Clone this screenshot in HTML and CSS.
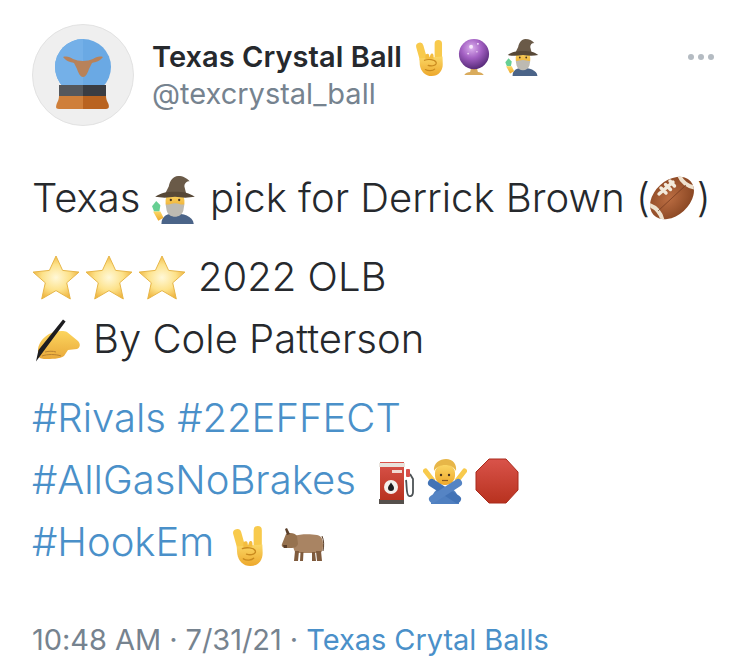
FILE: index.html
```html
<!DOCTYPE html>
<html lang="en">
<head>
  <meta charset="UTF-8" />
  <meta name="viewport" content="width=device-width, initial-scale=1" />
  <title>Texas Crystal Ball tweet</title>
  <link rel="stylesheet" href="styles.css">
</head>
<body>

  <svg class="defs" aria-hidden="true">
    <defs>
      <linearGradient id="skin" x1="0" y1="0" x2="0" y2="1">
        <stop offset="0" stop-color="#fbd765"/>
        <stop offset="1" stop-color="#eda82c"/>
      </linearGradient>
      <linearGradient id="writehand" x1="0" y1="0" x2="0" y2="1">
        <stop offset="0" stop-color="#fcd55e"/>
        <stop offset="1" stop-color="#e9a93a"/>
      </linearGradient>
      <radialGradient id="starfill" cx="0.5" cy="0.5" r="0.55">
        <stop offset="0" stop-color="#fff8d8"/>
        <stop offset="0.55" stop-color="#fde28a"/>
        <stop offset="1" stop-color="#eeb038"/>
      </radialGradient>
      <radialGradient id="orb" cx="0.42" cy="0.3" r="0.75">
        <stop offset="0" stop-color="#dcb0ee"/>
        <stop offset="0.45" stop-color="#a25fc2"/>
        <stop offset="1" stop-color="#4e2470"/>
      </radialGradient>
      <radialGradient id="ballfill" cx="0.45" cy="0.45" r="0.65">
        <stop offset="0" stop-color="#bb6d42"/>
        <stop offset="1" stop-color="#84421f"/>
      </radialGradient>
      <linearGradient id="redfill" x1="0" y1="0" x2="0" y2="1">
        <stop offset="0" stop-color="#d9534a"/>
        <stop offset="1" stop-color="#b8321f"/>
      </linearGradient>
      <clipPath id="ballclip">
        <ellipse cx="22" cy="22" rx="25" ry="17.500" transform="rotate(-42 22 22)"/>
      </clipPath>

      <symbol id="rock" viewBox="0 0 32 40">
        <path fill="none" stroke="#f8ca4c" stroke-width="8" stroke-linecap="round" d="M5 8l4.500 16M25 5v20"/>
        <path fill="url(#skin)" d="M4.500 21l25-2 .3 8c0 8-5 13-12 13S6 35 5 28z"/>
        <path fill="#f4bd3e" d="M11 18c0-2 3-3 4-1l.5 3 1-3c1-2 3-1.500 3.300.5l.2 3.500-9 1z"/>
        <path fill="none" stroke="#c98a1e" stroke-width="1.300" stroke-linecap="round" d="M10 23c4-1.500 11-1 12.500 2s-3.500 5-8.500 3.500M11 33c3 2 8 1.500 10-.5"/>
      </symbol>

      <symbol id="crystal" viewBox="0 0 32 38">
        <path fill="#d9ab5c" d="M6 37c1-2 4-3 6-3l1-4h6l1 4c2 0 5 1 6 3z"/>
        <circle cx="16" cy="15.500" r="15.500" fill="url(#orb)"/>
        <circle cx="13" cy="8" r="2" fill="#f6e6fb"/>
        <circle cx="20" cy="5" r="1" fill="#f6e6fb"/>
        <circle cx="10" cy="15" r="1" fill="#ebcdf4"/>
        <circle cx="19" cy="13" r="0.800" fill="#ebcdf4"/>
      </symbol>

      <symbol id="mage" viewBox="0 0 44 46">
        <path fill="#4b6488" d="M9 46c0-8 6-10 13-10s17 2 18 10z"/>
        <rect x="13" y="16" width="18" height="17" rx="7" fill="url(#skin)"/>
        <path fill="#bdbab2" d="M13 27c3 1 5-1 9-1s6 2 9 1l-1 6c-2 8-14 8-16 0z"/>
        <circle cx="18" cy="23" r="1.100" fill="#4a3520"/>
        <circle cx="26" cy="23" r="1.100" fill="#4a3520"/>
        <path fill="#6a5a48" d="M25 0c5 0 8 2 11 5-3 0-5 2-5 5l2 8H12l4-8c1-5 4-10 9-10z"/>
        <path fill="#574837" d="M3 20c5-4 11-5 19-5s14 1 19 5c-6 1-12 1-19 0-7 1-13 1-19 0z"/>
        <path fill="#67cf93" d="M4 24l4 4-1 6H2l-2-5z"/>
        <path fill="url(#skin)" d="M1 34h7l3 6-5 3z"/>
      </symbol>

      <symbol id="football" viewBox="0 0 44 44">
        <ellipse cx="22" cy="22" rx="25" ry="17.500" transform="rotate(-42 22 22)" fill="url(#ballfill)"/>
        <g clip-path="url(#ballclip)">
          <path fill="none" stroke="#eee2cf" stroke-width="4" d="M28 -4c2 8 8 14 18 16M-4 28c9 2 15 8 17 18"/>
        </g>
        <path fill="none" stroke="#f3eadb" stroke-width="3.400" stroke-linecap="round" d="M9 18l14-12M11 12l5 5M15.500 8.500l5 5M20 5l4.500 5"/>
        <path fill="none" stroke="#70361d" stroke-width="0.700" d="M8 35L36 9"/>
      </symbol>

      <symbol id="star" viewBox="0 0 48 46">
        <path fill="url(#starfill)" stroke="#e7b648" stroke-width="1" stroke-linejoin="round" d="M24 1l6.600 14.400 16.400 1.700-12.300 10.700 3.600 16.200L24 35.600 9.700 44l3.600-16.200L1 17.100l16.400-1.700z"/>
      </symbol>

      <symbol id="writing" viewBox="0 0 48 44">
        <path fill="url(#writehand)" d="M4 30c1-7 6-12 11-15 6-3 14-4 18-2l11 9c3 3 2 7-1 8l-9 1-4 6c-4 3-13 3-19 3-3 0-7-1-7-4z"/>
        <path fill="none" stroke="#b98232" stroke-width="1" d="M8 37c5-2 14-2 19 0M11 33c4-1 8-1 11 0"/>
        <path fill="#1d1d20" d="M29 .500l2.600 2L9 33l-7 9.500L4.500 31z"/>
      </symbol>

      <symbol id="pump" viewBox="0 0 38 44">
        <rect x="2" y="39" width="25" height="5" fill="#55504c"/>
        <rect x="3" y="2" width="24" height="38" fill="url(#redfill)"/>
        <rect x="2" y="3" width="26" height="4" fill="#e9e3dc"/>
        <rect x="15" y="10" width="10" height="3" fill="#f2d9d2"/>
        <circle cx="14" cy="27" r="7" fill="#f4f0ec"/>
        <path fill="#1d1d20" d="M14 22.500c2 3 3 4 3 5.500a3 3 0 0 1-6 0c0-1.500 1-2.500 3-5.500z"/>
        <path fill="none" stroke="#4d5356" stroke-width="1.800" stroke-linejoin="round" d="M29 20c1 5 0 15 3 16s4-2 4-4V19l-3-5"/>
        <rect x="29" y="9" width="4" height="8" rx="1" fill="#d8504a"/>
      </symbol>

      <symbol id="noman" viewBox="0 0 44 46">
        <path fill="#4f7fc0" d="M8 46c0-10 5-17 14-17s14 7 14 17z"/>
        <path fill="none" stroke="#f8ca4c" stroke-width="5" stroke-linecap="round" d="M2.500 13l7 9M41.500 13l-7 9"/>
        <rect x="12" y="6" width="20" height="21" rx="9" fill="url(#skin)"/>
        <path fill="#e7b648" d="M11 13c-1-8 6-12 12-12 7 0 11 5 10 12-2-4-6-6-11-6-4 0-9 2-11 6z"/>
        <circle cx="18" cy="17" r="1.200" fill="#4a3520"/>
        <circle cx="26" cy="17" r="1.200" fill="#4a3520"/>
        <path fill="none" stroke="#8b5a1e" stroke-width="1.200" d="M19 22.500h6"/>
        <path fill="none" stroke="#4273b6" stroke-width="8" stroke-linecap="round" d="M9 25l25 16"/>
        <path fill="none" stroke="#5584c4" stroke-width="8" stroke-linecap="round" d="M35 25L10 41"/>
      </symbol>

      <symbol id="stop" viewBox="0 0 44 46">
        <path fill="url(#redfill)" stroke="#a92a1c" stroke-width="1" d="M14 1h17l12 13v18L31 45H14L1 32V14z"/>
      </symbol>

      <symbol id="ox" viewBox="0 0 44 34">
        <path fill="#a98463" d="M13 8c6-2 16-2 23-1 5 1 6 5 6 10s-1 7-3 8H15c-3-3-4-10-2-17z"/>
        <path fill="#7f5b3d" d="M13 33l1-10h4l-1 10zM19 33l.5-9h3l-.5 9zM36 33l-1-10h5l1 10zM31 33l0-9h3l1 9z"/>
        <path fill="#96724f" d="M5 6c4-2 9-1 11 2l1 8c-1 3-4 4-6 4H5c-3 0-5-2-4-4z"/>
        <path fill="#5a3f2a" d="M6 7L4 1l2-1 3 6zM2 17h4v3H3z"/>
        <path fill="none" stroke="#5a3f2a" stroke-width="1" d="M41 8c2 4 2 10 1 15"/>
      </symbol>

      <symbol id="avatar-art" viewBox="0 0 102 102">
        <circle cx="51" cy="51" r="50.500" fill="#efefef" stroke="#e2e2e2"/>
        <circle cx="51" cy="43" r="28" fill="#6aa9e4"/>
        <path fill="#74b0e8" d="M51 15a28 28 0 0 0 0 56z"/>
        <path fill="#b8825a" d="M31 33c4-1 7 0 10 2 3 1 6 2 10 2s7-1 10-2c3-2 6-3 10-2-3 4-7 5-11 6-1 2-2 4-3 6-1 3-3 8-6 8s-5-5-6-8c-1-2-2-4-3-6-4-1-8-2-11-6z"/>
        <rect x="27" y="61" width="24" height="11" fill="#55585d"/>
        <rect x="51" y="61" width="23" height="11" fill="#3a3d43"/>
        <path fill="#cf7f3a" d="M27 72h24v13H27c-4 0-3-3-2-6 1-2 2-4 2-7z"/>
        <path fill="#b96320" d="M51 72h23c0 3 1 5 2 7s2 6-2 6H51z"/>
      </symbol>
    </defs>
  </svg>

  <main class="tweet">
    <header class="author">
      <svg class="avatar"><use href="#avatar-art"/></svg>
      <div class="names">
        <div class="display-name">
          <span>Texas Crystal Ball</span>
          <svg class="emo rock-sm"><use href="#rock"/></svg>
          <svg class="emo ball-sm"><use href="#crystal"/></svg>
          <svg class="emo mage-sm"><use href="#mage"/></svg>
        </div>
        <div class="handle">@texcrystal_ball</div>
      </div>
      <div class="more"><i></i><i></i><i></i></div>
    </header>

    <section class="body">
      <p>Texas <svg class="emo big mage-big"><use href="#mage"/></svg> pick for Derrick Brown (<svg class="emo big ball-big"><use href="#football"/></svg>)</p>
      <p>
        <svg class="emo big star"><use href="#star"/></svg><svg class="emo big star"><use href="#star"/></svg><svg class="emo big star last"><use href="#star"/></svg>2022 OLB<br>
        <svg class="emo big writing"><use href="#writing"/></svg>By Cole Patterson
      </p>
      <p class="tags">
        #Rivals #22EFFECT<br>
        #AllGasNoBrakes <svg class="emo big pump"><use href="#pump"/></svg><svg class="emo big noman"><use href="#noman"/></svg><svg class="emo big stop"><use href="#stop"/></svg><br>
        #HookEm <svg class="emo big rock-big"><use href="#rock"/></svg><svg class="emo big ox"><use href="#ox"/></svg>
      </p>
    </section>

    <footer class="meta">10:48 AM · 7/31/21 · <span class="source">Texas Crytal Balls</span></footer>
  </main>

</body>
</html>
```

FILE: styles.css
```css
body {
  font-family: Inter, 'Liberation Sans', sans-serif;
  background: #fff;
  color: #26292d;
  margin: 0;
  padding: 0;
}

.defs {
  width: 0;
  height: 0;
  display: block;
}

.tweet {
  padding: 24px 34px 0 32px;
}

.author {
  display: flex;
  align-items: flex-start;
}

.avatar {
  width: 102px;
  height: 102px;
  flex: none;
}

.names {
  margin-left: 18px;
  flex: 1;
  padding-top: 13px;
}

.display-name {
  display: flex;
  align-items: center;
  font-size: 29px;
  font-weight: 600;
  line-height: 40px;
  letter-spacing: 0.05px;
}

.handle {
  font-size: 29px;
  line-height: 34px;
  color: #76838f;
  letter-spacing: 0;
}

.emo {
  flex: none;
}

.rock-sm { width: 30px; height: 37px; margin-left: 13px; }
.ball-sm { width: 32px; height: 37px; margin-left: 13px; }
.mage-sm { width: 36px; height: 37px; margin-left: 15px; }

.more {
  display: flex;
  gap: 4px;
  padding-top: 30px;
  margin-right: 2px;
}

.more i {
  width: 6px;
  height: 6px;
  border-radius: 50%;
  background: #b4bbc2;
}

.body {
  margin-top: 41px;
  font-size: 40px;
  font-weight: 350;
  letter-spacing: 0;
  line-height: 62px;
}

.body p {
  margin: 0 0 17px;
  white-space: nowrap;
}

.big {
  vertical-align: -10px;
}

.mage-big { width: 46px; height: 48px; margin-right: 1px; vertical-align: -12px; }
.ball-big { width: 44px; height: 44px; margin-right: 3px; vertical-align: -8px; }
.star { width: 48px; height: 46px; margin-right: 5px; }
.star.last { margin-right: 12px; }
.writing { width: 48px; height: 44px; margin: 0 11px 0 2px; }

.tags {
  color: #4a90c9;
}

.pump { width: 38px; height: 44px; margin-left: 10px; margin-right: 8px; }
.noman { width: 44px; height: 46px; margin-right: 8px; }
.stop { width: 44px; height: 46px; }
.rock-big { width: 33px; height: 41px; margin-left: 7px; margin-right: 16px; }
.ox { width: 44px; height: 34px; vertical-align: -6px; }

.meta {
  margin-top: 49px;
  font-size: 29px;
  line-height: 36px;
  color: #76838f;
  letter-spacing: -0.05px;
}

.source {
  color: #4a90c9;
}
```
